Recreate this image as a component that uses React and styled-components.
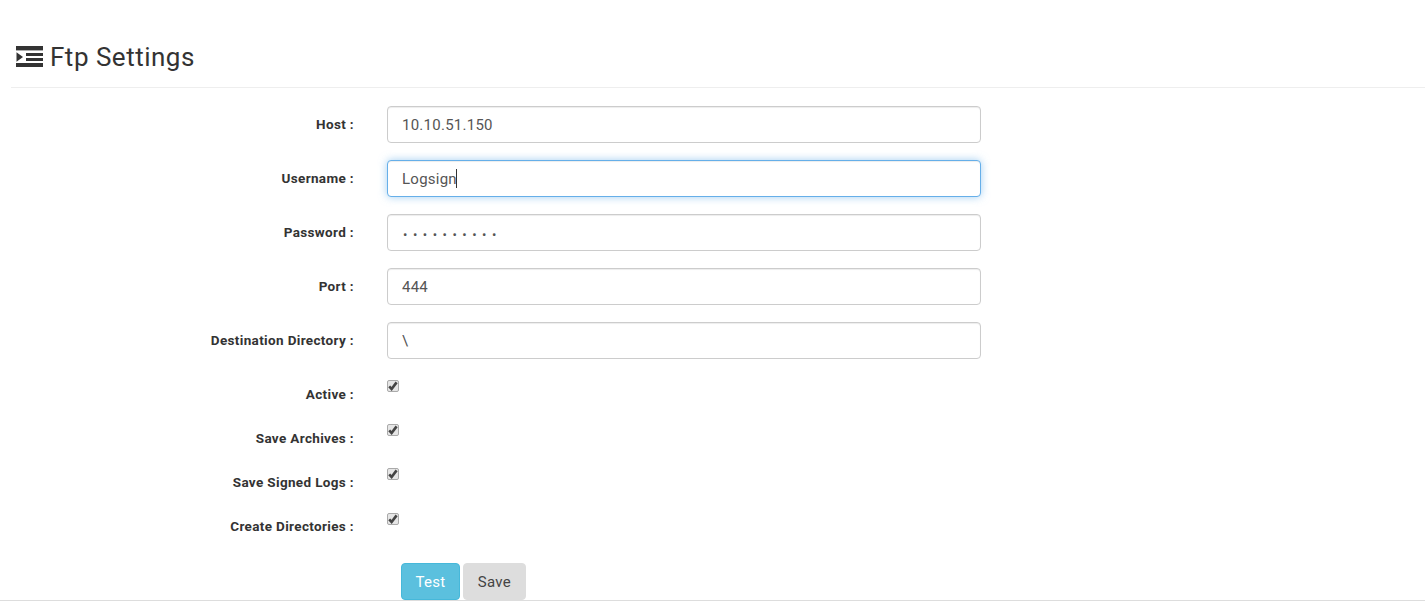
import React from 'react';
import styled, { createGlobalStyle } from 'styled-components';

const GlobalStyle = createGlobalStyle`
    html, body {
        margin: 0;
        padding: 0;
        background: #fff;
        font-family: Roboto, "Liberation Sans", sans-serif;
        color: #333;
    }
`;

const textFields = [
    { label: 'Host', value: '10.10.51.150' },
    { label: 'Username', value: 'Logsign', focused: true },
    { label: 'Password', value: 'logsign123', type: 'password' },
    { label: 'Port', value: '444' },
    { label: 'Destination Directory', value: '\\' },
];

const checkFields = ['Active', 'Save Archives', 'Save Signed Logs', 'Create Directories'];

const ListIcon = () => (
    <svg width="27" height="21" viewBox="0 0 27 21" fill="#333">
        <rect x="0" y="0" width="27" height="4.4" />
        <rect x="10" y="7" width="17" height="3" />
        <rect x="10" y="12" width="17" height="3" />
        <rect x="0" y="17" width="27" height="4" />
        <path d="M0.5 6.2 L7 11 L0.5 15.8 Z" />
    </svg>
);

const CheckMark = () => (
    <svg width="10" height="10" viewBox="0 0 10 10" fill="none" stroke="#444" strokeWidth="2.6">
        <path d="M1.2 5.4 L3.6 8 L8.6 1.4" />
    </svg>
);

const App = () => (
    <Page>
        <GlobalStyle />
        <Header>
            <ListIcon />
            <Title>Ftp Settings</Title>
        </Header>
        <Form onSubmit={(e) => e.preventDefault()}>
            {textFields.map((field) => (
                <Row key={field.label}>
                    <Label>{field.label} :</Label>
                    <InputWrap>
                        <Input
                            type={field.type || 'text'}
                            defaultValue={field.value}
                            $focused={field.focused}
                            $masked={field.type === 'password'}
                        />
                        {field.focused && <Caret />}
                    </InputWrap>
                </Row>
            ))}
            {checkFields.map((label) => (
                <CheckRow key={label}>
                    <CheckLabel>{label} :</CheckLabel>
                    <CheckBox>
                        <CheckMark />
                    </CheckBox>
                </CheckRow>
            ))}
            <Actions>
                <TestButton type="button">Test</TestButton>
                <SaveButton type="submit">Save</SaveButton>
            </Actions>
        </Form>
    </Page>
);

export default App;

// Styled Components
const Page = styled.div`
    height: 601px;
    box-sizing: border-box;
    border-bottom: 1px solid #ddd;
    overflow: hidden;
`;

const Header = styled.div`
    display: flex;
    align-items: center;
    gap: 7px;
    height: 88px;
    box-sizing: border-box;
    margin-left: 11px;
    padding: 26px 0 0 5px;
    border-bottom: 1px solid #eee;
`;

const Title = styled.h1`
    margin: 0;
    font-size: 26px;
    font-weight: 400;
    letter-spacing: 0.5px;
    color: #333;
`;

const Form = styled.form`
    display: flex;
    flex-direction: column;
    padding-top: 18px;
`;

const Row = styled.div`
    display: flex;
    align-items: center;
    height: 37px;
    margin-bottom: 17px;
`;

const Label = styled.label`
    width: 354px;
    position: relative;
    top: -1px;
    text-align: right;
    font-size: 13.5px;
    font-weight: 700;
    letter-spacing: 0.35px;
    color: #333;
`;

const InputWrap = styled.div`
    position: relative;
    margin-left: 33px;
    width: 594px;
`;

const Input = styled.input`
    display: block;
    width: 100%;
    height: 37px;
    box-sizing: border-box;
    padding: ${({ $masked }) => ($masked ? '3px 14px 0 15px' : '0 14px')};
    font-family: Roboto, "Liberation Sans", sans-serif;
    font-size: ${({ $masked }) => ($masked ? '13px' : '15px')};
    letter-spacing: ${({ $masked }) => ($masked ? '5.5px' : '0.25px')};
    color: #555;
    border-radius: 4px;
    outline: none;
    background: #fff;
    border: 1px solid ${({ $focused }) => ($focused ? '#66afe9' : '#ccc')};
    box-shadow: ${({ $focused }) =>
        $focused
            ? 'inset 0 1px 1px rgba(0,0,0,.075), 0 0 8px rgba(102,175,233,.6)'
            : 'inset 0 1px 1px rgba(0,0,0,.075)'};
`;

const Caret = styled.span`
    position: absolute;
    left: 69px;
    top: 9px;
    width: 1px;
    height: 19px;
    background: #333;
`;

const CheckRow = styled.div`
    display: flex;
    height: 44.2px;
`;

const CheckLabel = styled(Label)`
    top: 0;
    padding-top: 9.6px;
    height: 20px;
`;

const CheckBox = styled.span`
    display: flex;
    align-items: center;
    justify-content: center;
    box-sizing: border-box;
    width: 12px;
    height: 12px;
    margin: 0 0 0 33px;
    position: relative;
    top: 4px;
    background: #e6e6e6;
    border: 1px solid #aaa;
    border-radius: 2px;
`;

const Actions = styled.div`
    display: flex;
    gap: 3px;
    margin: 10px 0 0 401px;
`;

const BaseButton = styled.button`
    height: 37px;
    padding: 2px 14px 0;
    font-family: Roboto, "Liberation Sans", sans-serif;
    font-size: 15px;
    letter-spacing: 0.25px;
    border-radius: 4px;
    cursor: pointer;
`;

const TestButton = styled(BaseButton)`
    padding: 2px 13.5px 0;
    color: #fff;
    background: #5bc0de;
    border: 1px solid #46b8da;
`;

const SaveButton = styled(BaseButton)`
    color: #444;
    background: #ddd;
    border: 1px solid #ddd;
`;
